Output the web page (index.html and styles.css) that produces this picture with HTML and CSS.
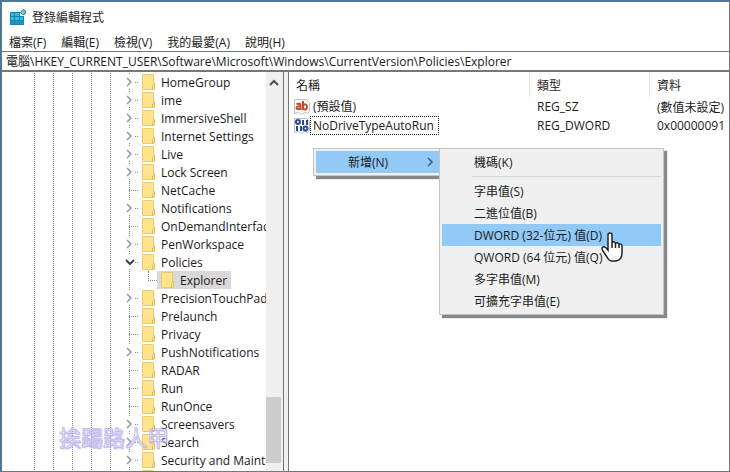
FILE: index.html
```html
<!DOCTYPE html>
<html lang="zh-Hant">

<head>
    <meta charset="utf-8">
    <title>登錄編輯程式</title>
    <link rel="stylesheet" href="styles.css">
</head>

<body>

    <svg class="sprites" aria-hidden="true">
        <symbol id="folder" viewBox="0 0 14 16">
            <path d="M0.5 0.5h11v15h-11z" fill="#ffe48c" stroke="#e8cb6c" />
            <path d="M11.5 10.5l1-1v5.5l-2 0.5v-4z" fill="#ffe9a2" stroke="#dfbd55" />
        </symbol>
        <symbol id="right" viewBox="0 0 8 10">
            <path d="M2 1l4 4-4 4" fill="none" stroke="currentColor" stroke-width="1.5" />
        </symbol>
        <symbol id="down" viewBox="0 0 10 8">
            <path d="M1 2l4 4 4-4" fill="none" stroke="currentColor" stroke-width="2" />
        </symbol>
    </svg>

    <div class="window">
        <header class="titlebar">
            <svg class="app-icon" viewBox="0 0 16 16">
                <path d="M0 3h10v4h4v9H0z" fill="#1585ab" />
                <path d="M1 4h3v3H1zM5 4h4v3H5zM1 8h3v3H1zM5 8h4v3H5zM10 8h3v3h-3z" fill="#38bce0" />
                <path d="M1 12h3v3H1zM5 12h4v3H5zM10 12h3v3h-3z" fill="#1c9dc8" />
                <path d="M13 0.5l2.5 1.500-0.500 3-2.500 0.500-2-2z" fill="#7fc4da" stroke="#33758c" />
            </svg>
            <span>登錄編輯程式</span>
        </header>

        <nav class="menubar">
            <button>檔案(F)</button>
            <button>編輯(E)</button>
            <button>檢視(V)</button>
            <button>我的最愛(A)</button>
            <button>說明(H)</button>
        </nav>

        <input class="address" aria-label="路徑" value="電腦\HKEY_CURRENT_USER\Software\Microsoft\Windows\CurrentVersion\Policies\Explorer">

        <main class="panes">
            <section class="tree-pane">
                <ul id="tree" class="tree"></ul>
                <div class="scrollbar">
                    <button class="scroll-up" aria-label="向上捲動"><svg viewBox="0 0 10 8"><path d="M1 6l4-4 4 4" fill="none" stroke="#505050" stroke-width="2" /></svg></button>
                    <div class="track"></div>
                    <div class="thumb"></div>
                    <div class="scroll-end"></div>
                </div>
                <div class="watermark">挨踢路人甲</div>
            </section>
            <div class="splitter"></div>
            <section class="list-pane">
                <table class="values">
                    <thead>
                        <tr><th class="name">名稱</th><th class="type">類型</th><th>資料</th></tr>
                    </thead>
                    <tbody>
                        <tr>
                            <td><div class="value">
                                <svg class="value-icon" viewBox="0 0 16 16">
                                    <path d="M0.5 0.5h12l3 3v9l-2 2-3-1-3 2-3-2-4 1z" fill="#fff" stroke="#b9c0c6" />
                                    <g fill="none" stroke="#c0492b" stroke-width="2">
                                        <path d="M2.500 5q4-1 4 1v5M6.500 7.500c-3-0.500-4 0.500-4 1.500s2.500 2 4 0" />
                                        <path d="M9 2v9M9 6.500c1.500-2 4-1.500 4 1.500s-2.500 3-4 1.500" />
                                    </g>
                                </svg>
                                <span>(預設值)</span>
                            </div></td>
                            <td>REG_SZ</td>
                            <td>(數值未設定)</td>
                        </tr>
                        <tr>
                            <td><div class="value">
                                <svg class="value-icon" viewBox="0 0 16 16">
                                    <path d="M0.5 0.5h12l3 3v9l-2 2-3-1-3 2-3-2-4 1z" fill="#fff" stroke="#b9c0c6" />
                                    <g fill="none" stroke="#27488f" stroke-width="2">
                                        <circle cx="4" cy="4" r="2" />
                                        <path d="M9 2v5M13 2v5M3 8v5M7 8v5" />
                                        <circle cx="11.500" cy="10.500" r="2" />
                                    </g>
                                </svg>
                                <span class="focused">NoDriveTypeAutoRun</span>
                            </div></td>
                            <td>REG_DWORD</td>
                            <td>0x00000091</td>
                        </tr>
                    </tbody>
                </table>
            </section>
        </main>

        <div class="menu context-menu">
            <button class="active">新增(N)<svg viewBox="0 0 8 10"><use href="#right" /></svg></button>
        </div>
        <div class="menu submenu">
            <button>機碼(K)</button>
            <hr>
            <button>字串值(S)</button>
            <button>二進位值(B)</button>
            <button class="active">DWORD (32-位元) 值(D)</button>
            <button>QWORD (64 位元) 值(Q)</button>
            <button>多字串值(M)</button>
            <button>可擴充字串值(E)</button>
        </div>
        <svg class="cursor" viewBox="0 0 22 30">
            <path d="M7 18V3q0-2 2-2t2 2v7q2-1 3.500 1 2-1 3.500 1 3-0.500 3 2v7q0 7-6 8h-4q-3 0-5-4l-4-6q-2-3 0-4 2-1 5 3z" fill="#fff" stroke="#222" stroke-width="1.5" />
            <path d="M11 10v6M14.500 11v5M18 12v4" stroke="#222" stroke-width="1.5" />
        </svg>
    </div>

    <script>
        const tree = document.getElementById('tree');
        // name, expander: '>' closed, 'v' open, '' none, '-' selected child
        const keys = [
            ['HomeGroup', '>'], ['ime', '>'], ['ImmersiveShell', '>'],
            ['Internet Settings', '>'], ['Live', '>'], ['Lock Screen', '>'],
            ['NetCache', ''], ['Notifications', '>'], ['OnDemandInterfaceCache', ''],
            ['PenWorkspace', '>'], ['Policies', 'v'], ['Explorer', '-'],
            ['PrecisionTouchPad', '>'], ['Prelaunch', ''], ['Privacy', ''],
            ['PushNotifications', '>'], ['RADAR', ''], ['Run', ''], ['RunOnce', ''],
            ['Screensavers', '>'], ['Search', '>'], ['Security and Maintenance', '>'],
            ['', '']
        ];
        keys.forEach(([name, state]) => {
            const row = document.createElement('li');
            row.className = state === '-' ? 'child' : '';
            let expander = '<span class="branch"></span>';
            if (state === '>') {
                expander = `<button class="expander" aria-label="${name}"><svg viewBox="0 0 8 10"><use href="#right"/></svg></button>`;
            } else if (state === 'v') {
                expander = `<button class="expander open" aria-label="${name}"><svg viewBox="0 0 10 8"><use href="#down"/></svg></button>`;
            }
            row.innerHTML = `${expander}<span class="key"><svg class="folder"><use href="#folder"/></svg>${name}</span>`;
            tree.appendChild(row);
        });
    </script>

</body>

</html>
```

FILE: styles.css
```css
* {
    box-sizing: border-box;
}

body {
    margin: 0;
    font-family: "Open Sans", "Noto Sans CJK TC", sans-serif;
    font-size: 12px;
    color: #1a1a1a;
}

button {
    padding: 0;
    border: none;
    background: none;
    font: inherit;
    color: inherit;
}

.sprites {
    position: absolute;
    width: 0;
    height: 0;
}

.window {
    position: relative;
    display: flex;
    flex-direction: column;
    height: 100vh;
    border: 1px solid #777;
    border-top: 2px solid #4f7796;
    border-left: 2px solid #4f7796;
    overflow: hidden;
}

.titlebar {
    display: flex;
    align-items: center;
    gap: 6px;
    height: 30px;
    padding-left: 8px;
}

.app-icon {
    width: 16px;
    height: 16px;
}

.menubar {
    display: flex;
    align-items: center;
    gap: 15px;
    height: 19px;
    padding-left: 7px;
}

.address {
    height: 21px;
    padding: 0 4px;
    border: 1px solid #777;
    border-width: 1px 0 2px;
    font: inherit;
    color: inherit;
    outline: none;
}

.panes {
    display: flex;
    flex: 1;
    min-height: 0;
}

.tree-pane {
    position: relative;
    display: flex;
    width: 282px;
    border-right: 1px solid #777;
    overflow: hidden;
}

.tree {
    flex: 1;
    min-width: 0;
    margin: 0;
    padding: 1px 0 0;
    list-style: none;
    overflow: hidden;
}

.tree li {
    display: flex;
    align-items: center;
    height: 18px;
    padding-left: 127px;
    white-space: nowrap;
    background:
        repeating-linear-gradient(#888 0 1px, transparent 1px 2px) 32px 0 / 1px 100% no-repeat,
        repeating-linear-gradient(#888 0 1px, transparent 1px 2px) 51px 0 / 1px 100% no-repeat,
        repeating-linear-gradient(#888 0 1px, transparent 1px 2px) 70px 0 / 1px 100% no-repeat,
        repeating-linear-gradient(#888 0 1px, transparent 1px 2px) 89px 0 / 1px 100% no-repeat,
        repeating-linear-gradient(#888 0 1px, transparent 1px 2px) 108px 0 / 1px 100% no-repeat,
        repeating-linear-gradient(#888 0 1px, transparent 1px 2px) 127px 0 / 1px 100% no-repeat;
}

.tree li.child {
    padding-left: 146px;
}

.branch {
    flex: none;
    width: 9px;
    height: 1px;
    background: repeating-linear-gradient(90deg, #888 0 1px, transparent 1px 2px);
}

.child .branch {
    height: 10px;
    margin-bottom: 8px;
    border-left: 1px dotted #888;
    border-bottom: 1px dotted #888;
    background: none;
}

.expander {
    display: flex;
    flex: none;
    align-items: center;
    width: 13px;
    height: 14px;
    margin-left: -4px;
    color: #8a9ba3;
    background: linear-gradient(#fff, #fff) 0 0 / 9px 100% no-repeat, repeating-linear-gradient(90deg, #888 0 1px, transparent 1px 2px) 0 7px / 100% 1px no-repeat;
}

.expander svg {
    width: 8px;
    height: 10px;
}

.expander.open {
    color: #404040;
}

.expander.open svg {
    width: 10px;
    height: 8px;
}

.key {
    display: flex;
    flex: none;
    align-items: center;
    gap: 5px;
    height: 18px;
    padding: 0 4px;
}

.child .key {
    background: #d9d9d9;
}

.folder {
    flex: none;
    width: 14px;
    height: 16px;
}

.scrollbar {
    display: flex;
    flex: none;
    flex-direction: column;
    width: 17px;
    padding-right: 2px;
    background: #f0f0f0;
}

.scroll-up {
    height: 20px;
}

.scroll-up svg {
    width: 10px;
    height: 8px;
}

.track {
    flex: 305;
}

.thumb {
    flex: 66;
    background: #cdcdcd;
}

.scroll-end {
    flex: 8;
}

.watermark {
    position: absolute;
    left: 57px;
    bottom: 20px;
    font-size: 22px;
    line-height: 28px;
    color: #fff;
    -webkit-text-stroke: 1px #b3a9ea;
    text-shadow: 1px 1px 1px #b9b0ee;
    opacity: 0.8;
    pointer-events: none;
}

.splitter {
    width: 5px;
    background: #f0f0f0;
    border-right: 1px solid #777;
}

.list-pane {
    flex: 1;
}

.values {
    width: 100%;
    border-spacing: 0;
    table-layout: fixed;
}

.values th {
    height: 25px;
    padding: 0 7px;
    font-weight: normal;
    text-align: left;
    border-left: 1px solid #e5e5e5;
}

.values th.name {
    width: 240px;
    border-left: none;
}

.values th.type {
    width: 120px;
}

.values td {
    height: 19px;
    padding: 0 0 0 8px;
    white-space: nowrap;
}

.value {
    display: flex;
    align-items: center;
    margin-left: -3px;
}

.value-icon {
    width: 16px;
    height: 16px;
}

.value span {
    padding: 0 2px;
    line-height: 17px;
    border: 1px solid transparent;
}

.value .focused {
    padding-right: 4px;
    border: 1px dotted #222;
}

.menu {
    position: absolute;
    padding: 2px;
    background: #f0f0f0;
    border: 1px solid #c4c4c4;
    box-shadow: 3px 3px 1px #888;
}

.menu button {
    display: flex;
    align-items: center;
    width: 100%;
    height: 22px;
    padding-left: 32px;
    white-space: nowrap;
}

.menu .active {
    background: #91c9f7;
}

.menu svg {
    width: 8px;
    height: 10px;
    margin: 0 5px 0 auto;
    color: #3f5f78;
}

.menu hr {
    margin: 3px 0 3px 30px;
    border: none;
    border-top: 1px solid #d5d5d5;
}

.context-menu {
    left: 311px;
    top: 146px;
    width: 129px;
}

.submenu {
    left: 437px;
    top: 146px;
    width: 225px;
}

.cursor {
    position: absolute;
    left: 599px;
    top: 230px;
    width: 22px;
    height: 30px;
}
```
